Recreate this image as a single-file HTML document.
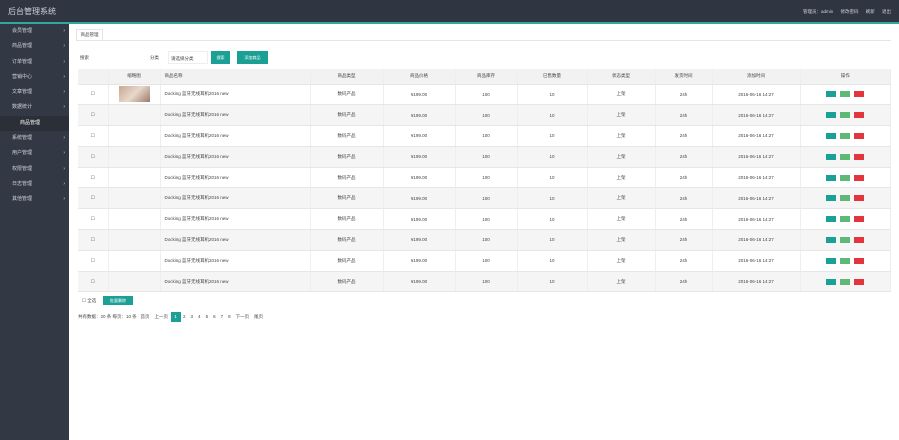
<!DOCTYPE html><html><head><meta charset="utf-8"><style>
*{margin:0;padding:0;box-sizing:border-box}
body{width:899px;height:440px;overflow:hidden;font-family:"Liberation Sans","Noto Sans CJK SC",sans-serif;font-size:5px;color:#444;background:#fff;position:relative}
.top{position:absolute;left:0;top:0;width:899px;height:22px;background:#2f3541;color:#cfd3da}
.top .t{position:absolute;left:8px;top:6px;font-size:8px}
.top .r{position:absolute;right:8px;top:9px;font-size:4.5px;word-spacing:6px}
.line{position:absolute;left:0;top:22px;width:899px;height:2px;background:#33a89a}
.side{position:absolute;left:0;top:24px;width:69px;height:416px;background:#333944;color:#cfd3da}
.side div{height:15.3px;line-height:15.3px;padding-left:12px;font-size:5px;position:relative}
.side div:after{content:"›";position:absolute;right:4px;top:0}
.side div.s{padding-left:20px;background:#2a2f38;color:#fff}.side div.s:after{content:""}
.tab{position:absolute;left:76px;top:29px;width:27px;height:11px;border:1px solid #e5e5e5;border-bottom:none;font-size:4.5px;line-height:10px;text-align:center}
.tl{position:absolute;left:76px;top:40px;width:815px;height:1px;background:#e5e5e5}
.bar{position:absolute;top:51px;height:13px;line-height:13px;font-size:4.5px}
.btn{position:absolute;background:#1aa094;color:#fff;text-align:center;font-size:4px}
table{position:absolute;left:78px;top:69px;width:813px;border-collapse:collapse;font-size:4.5px}
td,th{height:20.8px;border-bottom:1px solid #e6e6e6;border-right:1px solid #eee;text-align:center;font-weight:normal}
th{height:15px;background:#f2f2f2}
tr:nth-child(odd) td{background:#f5f5f5}
td.n{text-align:left;padding-left:4px}
.b{display:inline-block;width:10px;height:6px;margin:0 2px;vertical-align:middle}
.pg{position:absolute;left:78px;top:312px;height:10px;font-size:4.5px;line-height:10px}
.pg span{display:inline-block;padding:0 2.5px}
.pg .on{background:#1aa094;color:#fff;width:10px;text-align:center}
</style></head><body>
<div class="top"><div class="t">后台管理系统</div><div class="r">管理员：admin 修改密码 刷新 退出</div></div>
<div class="line"></div>
<div class="side"><div>会员管理</div><div>商品管理</div><div>订单管理</div><div>营销中心</div><div>文章管理</div><div>数据统计</div><div class="s">商品管理</div><div>系统管理</div><div>用户管理</div><div>权限管理</div><div>日志管理</div><div>其他管理</div></div>
<div class="tab">商品管理</div><div class="tl"></div>
<div class="bar" style="left:80px">搜索</div>
<div class="bar" style="left:150px">分类</div>
<div class="bar" style="left:168px;width:40px;border:1px solid #eee;padding-left:2px">请选择分类</div>
<div class="btn" style="left:211px;top:51px;width:19px;height:13px;line-height:13px">搜索</div>
<div class="btn" style="left:237px;top:51px;width:31px;height:13px;line-height:13px">添加商品</div>
<table>
<tr><th style="width:30px"></th><th style="width:52px">缩略图</th><th style="width:150px;text-align:left;padding-left:4px">商品名称</th><th style="width:73px">商品类型</th><th style="width:72px">商品价格</th><th style="width:62px">商品库存</th><th style="width:70px">已售数量</th><th style="width:68px">状态类型</th><th style="width:57px">发货时间</th><th style="width:88px">添加时间</th><th>操作</th></tr>
<tr><td>☐</td><td><div style="width:31px;height:16px;margin:auto;background:linear-gradient(135deg,#c8a890,#e8d8cc 50%,#9a7a68)"></div></td><td class="n">Docking 蓝牙无线耳机2016 new</td><td>数码产品</td><td>¥199.00</td><td>100</td><td>10</td><td>上架</td><td>24h</td><td>2016-06-16 14:27</td><td><i class="b" style="background:#1aa094"></i><i class="b" style="background:#5fb878"></i><i class="b" style="background:#e2353d"></i></td></tr>
<tr><td>☐</td><td></td><td class="n">Docking 蓝牙无线耳机2016 new</td><td>数码产品</td><td>¥199.00</td><td>100</td><td>10</td><td>上架</td><td>24h</td><td>2016-06-16 14:27</td><td><i class="b" style="background:#1aa094"></i><i class="b" style="background:#5fb878"></i><i class="b" style="background:#e2353d"></i></td></tr>
<tr><td>☐</td><td></td><td class="n">Docking 蓝牙无线耳机2016 new</td><td>数码产品</td><td>¥199.00</td><td>100</td><td>10</td><td>上架</td><td>24h</td><td>2016-06-16 14:27</td><td><i class="b" style="background:#1aa094"></i><i class="b" style="background:#5fb878"></i><i class="b" style="background:#e2353d"></i></td></tr>
<tr><td>☐</td><td></td><td class="n">Docking 蓝牙无线耳机2016 new</td><td>数码产品</td><td>¥199.00</td><td>100</td><td>10</td><td>上架</td><td>24h</td><td>2016-06-16 14:27</td><td><i class="b" style="background:#1aa094"></i><i class="b" style="background:#5fb878"></i><i class="b" style="background:#e2353d"></i></td></tr>
<tr><td>☐</td><td></td><td class="n">Docking 蓝牙无线耳机2016 new</td><td>数码产品</td><td>¥199.00</td><td>100</td><td>10</td><td>上架</td><td>24h</td><td>2016-06-16 14:27</td><td><i class="b" style="background:#1aa094"></i><i class="b" style="background:#5fb878"></i><i class="b" style="background:#e2353d"></i></td></tr>
<tr><td>☐</td><td></td><td class="n">Docking 蓝牙无线耳机2016 new</td><td>数码产品</td><td>¥199.00</td><td>100</td><td>10</td><td>上架</td><td>24h</td><td>2016-06-16 14:27</td><td><i class="b" style="background:#1aa094"></i><i class="b" style="background:#5fb878"></i><i class="b" style="background:#e2353d"></i></td></tr>
<tr><td>☐</td><td></td><td class="n">Docking 蓝牙无线耳机2016 new</td><td>数码产品</td><td>¥199.00</td><td>100</td><td>10</td><td>上架</td><td>24h</td><td>2016-06-16 14:27</td><td><i class="b" style="background:#1aa094"></i><i class="b" style="background:#5fb878"></i><i class="b" style="background:#e2353d"></i></td></tr>
<tr><td>☐</td><td></td><td class="n">Docking 蓝牙无线耳机2016 new</td><td>数码产品</td><td>¥199.00</td><td>100</td><td>10</td><td>上架</td><td>24h</td><td>2016-06-16 14:27</td><td><i class="b" style="background:#1aa094"></i><i class="b" style="background:#5fb878"></i><i class="b" style="background:#e2353d"></i></td></tr>
<tr><td>☐</td><td></td><td class="n">Docking 蓝牙无线耳机2016 new</td><td>数码产品</td><td>¥199.00</td><td>100</td><td>10</td><td>上架</td><td>24h</td><td>2016-06-16 14:27</td><td><i class="b" style="background:#1aa094"></i><i class="b" style="background:#5fb878"></i><i class="b" style="background:#e2353d"></i></td></tr>
<tr><td>☐</td><td></td><td class="n">Docking 蓝牙无线耳机2016 new</td><td>数码产品</td><td>¥199.00</td><td>100</td><td>10</td><td>上架</td><td>24h</td><td>2016-06-16 14:27</td><td><i class="b" style="background:#1aa094"></i><i class="b" style="background:#5fb878"></i><i class="b" style="background:#e2353d"></i></td></tr>
</table>
<div class="bar" style="left:82px;top:294px">☐ 全选</div>
<div class="btn" style="left:103px;top:296px;width:30px;height:9px;line-height:9px">批量删除</div>
<div class="pg">共有数据：20 条 每页：10 条 <span>首页</span><span>上一页</span><span class="on">1</span><span>2</span><span>3</span><span>4</span><span>5</span><span>6</span><span>7</span><span>8</span><span>下一页</span><span>尾页</span></div>
</body></html>
